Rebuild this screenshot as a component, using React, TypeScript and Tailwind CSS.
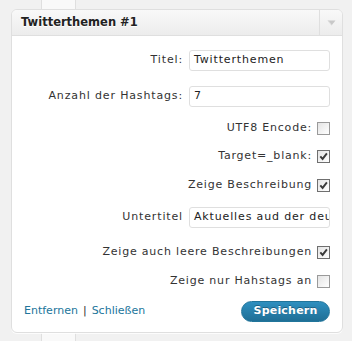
import React from "react";

function Check({ checked }: { checked: boolean }) {
  return (
    <span
      className={
        "ml-[5px] inline-flex h-[13px] w-[13px] shrink-0 items-center justify-center border bg-gradient-to-br from-[#e4e4e4] to-[#ffffff] " +
        (checked ? "border-[#6f6f6f]" : "border-[#9a9a9a]")
      }
    >
      {checked && (
        <svg width="9" height="9" viewBox="0 0 9 9">
          <path d="M1.3 4.3 L3.6 6.9 L7.9 1.4" fill="none" stroke="#3a3a3a" strokeWidth="1.9" />
        </svg>
      )}
    </span>
  );
}

function TextRow({ label, value, mt }: { label: string; value: string; mt: string }) {
  return (
    <div className={"flex h-[21px] items-center justify-end " + mt}>
      <span className="mr-[6px] whitespace-nowrap tracking-[0.85px]">{label}</span>
      <div className="flex h-[21px] w-[141px] items-center overflow-hidden whitespace-nowrap rounded-[3px] border border-[#dfdfdf] bg-white pl-[4px] tracking-[0.85px] text-[#222]">
        {value}
      </div>
    </div>
  );
}

function CheckRow({ label, checked, mt }: { label: string; checked: boolean; mt: string }) {
  return (
    <div className={"flex h-[21px] items-center justify-end " + mt}>
      <span className="whitespace-nowrap tracking-[0.8px]">{label}</span>
      <Check checked={checked} />
    </div>
  );
}

export default function App() {
  return (
    <div className="relative h-[341px] w-[352px] overflow-hidden bg-[#f1f1f1] font-['DejaVu_Sans',Verdana,sans-serif] text-[11px] text-[#333]">
      <div className="absolute inset-y-0 left-[41px] w-[35px] border-x border-[#dfdfdf] bg-[#f9f9f9]" />
      <div className="relative ml-[11px] mt-[9px] w-[332px] rounded-[6px] border border-[#dfdfdf] bg-white shadow-[0_1px_0_rgba(255,255,255,0.8)]">
        <div className="flex h-[26px] items-stretch rounded-t-[5px] border-b border-[#dfdfdf] bg-gradient-to-b from-[#f9f9f9] to-[#ececec]">
          <div className="flex flex-1 items-center pl-[9px] text-[11.5px] font-bold text-[#222] [text-shadow:0_1px_0_#fff]">
            Twitterthemen #1
          </div>
          <div className="flex w-[23px] items-center justify-center border-l border-[#dfdfdf]">
            <svg width="9" height="6" viewBox="0 0 9 6">
              <path d="M0.5 0.5 L8.5 0.5 L4.5 5.5 Z" fill="#c8c8c8" />
              <path d="M1.5 1 L4.5 5" stroke="#ffffff" strokeWidth="0.6" opacity="0.6" />
            </svg>
          </div>
        </div>
        <div className="flex flex-col px-[12px] pb-[10px]">
          <TextRow label="Titel:" value="Twitterthemen" mt="mt-[14px]" />
          <TextRow label="Anzahl der Hashtags:" value="7" mt="mt-[15px]" />
          <CheckRow label="UTF8 Encode:" checked={false} mt="mt-[11px]" />
          <CheckRow label="Target=_blank:" checked={true} mt="mt-[7px]" />
          <CheckRow label="Zeige Beschreibung" checked={true} mt="mt-[8px]" />
          <TextRow label="Untertitel" value="Aktuelles aud der deutschen Twitterwelt" mt="mt-[11px]" />
          <CheckRow label="Zeige auch leere Beschreibungen" checked={true} mt="mt-[14px]" />
          <CheckRow label="Zeige nur Hahstags an" checked={false} mt="mt-[8px]" />
          <div className="mt-[9px] flex h-[21px] items-center justify-between">
            <div className="flex items-center text-[#21759b]">
              <span>Entfernen</span>
              <span className="mx-[5px] text-[#333]">|</span>
              <span>Schließen</span>
            </div>
            <div className="flex h-[21px] w-[89px] items-center justify-center rounded-full border border-[#21759b] bg-gradient-to-b from-[#2e8fbf] to-[#1f6f96] text-[11px] font-bold tracking-[0.2px] text-white [text-shadow:0_-1px_0_rgba(0,0,0,0.3)]">
              Speichern
            </div>
          </div>
        </div>
      </div>
    </div>
  );
}
